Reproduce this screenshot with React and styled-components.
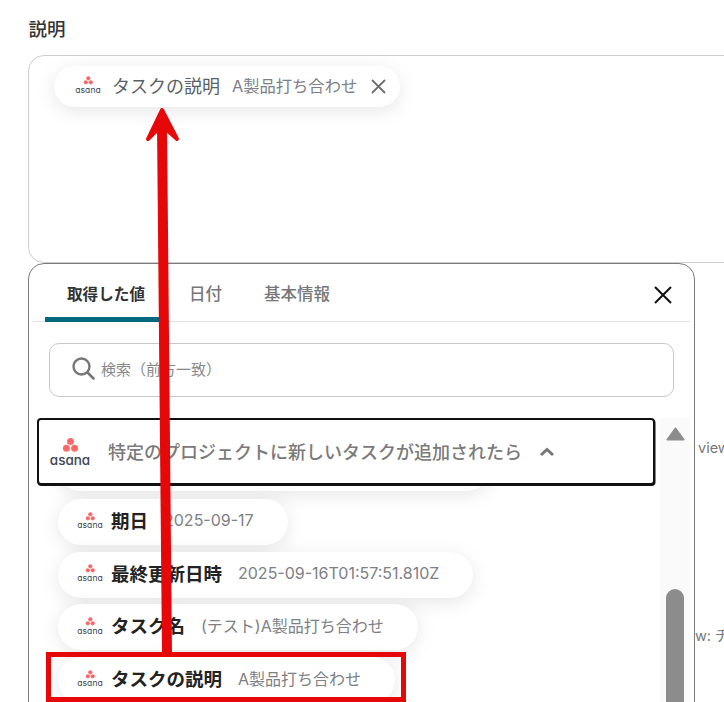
import React from "react";
import styled, { createGlobalStyle } from "styled-components";

const Global = createGlobalStyle`
  html, body { margin: 0; padding: 0; background: #fff; overflow: hidden; }
  body { font-family: Inter, "Noto Sans CJK JP", sans-serif; }
  #root { width: 724px; height: 702px; overflow: hidden; }
`;

const Page = styled.div`
  position: relative;
  width: 724px;
  height: 702px;
  overflow: hidden;
  padding: 16px 0 0 28px;
  box-sizing: border-box;
`;

const FieldLabel = styled.div`
  font-size: 18.5px;
  font-weight: 500;
  line-height: 26px;
  color: #333;
  margin: 0 0 13px 0.5px;
`;

const Area = styled.div`
  width: 760px;
  height: 208px;
  box-sizing: border-box;
  border: 1px solid #ccced2;
  border-radius: 16px;
  padding: 10px 0 0 25px;
`;

const Chip = styled.div`
  display: inline-flex;
  align-items: center;
  height: ${(p) => p.$height || 46}px;
  box-sizing: border-box;
  padding: ${(p) => p.$padding || "0 34px 0 19px"};
  border-radius: 24px;
  background: #fff;
  box-shadow: 0 4px 20px rgba(0, 0, 0, 0.1);
  white-space: nowrap;
  flex: none;
`;

const LogoBox = styled.span`
  display: inline-flex;
  flex-direction: column;
  align-items: center;
  width: ${(p) => (p.$large ? 40 : 26)}px;
  margin-bottom: ${(p) => (p.$large ? 2 : 4)}px;
  flex: none;
`;

const LogoDots = styled.svg`
  display: block;
  width: ${(p) => (p.$large ? 21 : 12.6)}px;
  height: ${(p) => (p.$large ? 18 : 10.8)}px;
`;

const LogoWord = styled.span`
  font-family: Inter, sans-serif;
  font-feature-settings: "cv11" 1;
  font-size: ${(p) => (p.$large ? 13.5 : 8.5)}px;
  line-height: ${(p) => (p.$large ? 12 : 8)}px;
  letter-spacing: ${(p) => (p.$large ? 0 : 0.1)}px;
  color: #3d4452;
`;

const ChipName = styled.span`
  font-size: ${(p) => (p.$light ? 18 : 18.5)}px;
  font-weight: ${(p) => (p.$light ? 400 : 700)};
  color: ${(p) => (p.$light ? "#5a5f66" : "#222")};
  margin: 0 0 4px ${(p) => p.$gap || 8}px;
`;

const ChipValue = styled.span`
  font-size: ${(p) => (p.$wide ? 16.3 : 16)}px;
  color: #7d8085;
  margin: 0 0 4px ${(p) => p.$gap || 16}px;
`;

const ChipClose = styled.svg`
  width: 17px;
  height: 17px;
  margin-left: 13px;
  flex: none;
`;

const Lower = styled.div`
  display: flex;
  align-items: flex-start;
`;

const Panel = styled.div`
  width: 667px;
  height: 470px;
  flex: none;
  box-sizing: border-box;
  border: 1px solid #7b7b7b;
  border-radius: 16px;
  padding: 0 4px;
  background: #fff;
  overflow: hidden;
`;

const TabBar = styled.div`
  display: flex;
  align-items: stretch;
  height: 58px;
  padding-left: 12px;
  border-bottom: 1px solid #e4e4e4;
  box-sizing: border-box;
`;

const Tab = styled.div`
  display: flex;
  align-items: center;
  padding: ${(p) => (p.$active ? "4px 22px 0 22px" : "4px 20px 0 22px")};
  font-size: ${(p) => (p.$active ? 15.6 : 16.5)}px;
  font-weight: ${(p) => (p.$active ? 700 : 500)};
  color: ${(p) => (p.$active ? "#333" : "#777")};
  border-bottom: 5px solid ${(p) => (p.$active ? "#00687f" : "transparent")};
  border-radius: 5px 5px 0 0;
  margin-bottom: -1px;
`;

const TabClose = styled.svg`
  width: 18px;
  height: 18px;
  margin: 22px 18px 0 auto;
`;

const SearchBox = styled.div`
  display: flex;
  align-items: center;
  height: 54px;
  margin: 21px 16px 21px 16px;
  padding: 0 0 3px 22px;
  box-sizing: border-box;
  border: 1px solid #c8c8c8;
  border-radius: 10px;
  color: #888;
  font-size: 15px;
`;

const SearchIcon = styled.svg`
  width: 23px;
  height: 23px;
  margin-right: 6px;
  flex: none;
`;

const Body = styled.div`
  display: flex;
  align-items: stretch;
  height: 300px;
`;

const ListColumn = styled.div`
  width: 627px;
  flex: none;
  padding-left: 4px;
  box-sizing: border-box;
`;

const GroupHeader = styled.div`
  position: relative;
  z-index: 1;
  display: flex;
  align-items: center;
  height: 67px;
  width: 618px;
  box-sizing: border-box;
  padding-left: 11px;
  border: 2px solid #111;
  border-radius: 4px;
  box-shadow: 0.5px 1px 0 #111;
  background: #fff;
  font-size: 18px;
  font-weight: 500;
  color: #7a7a7a;
`;

const GroupTitle = styled.span`
  margin: 0 0 2px 18px;
  white-space: nowrap;
`;

const Chevron = styled.svg`
  width: 16px;
  height: 10px;
  margin-left: 17px;
  flex: none;
`;

const ChipList = styled.div`
  display: flex;
  flex-direction: column;
  align-items: flex-start;
  gap: 6.67px;
  margin: -40px 0 0 21px;
`;

const PartialChip = styled(Chip)`
  width: 432px;
  margin-bottom: 1.33px;
`;

const Track = styled.div`
  width: 30px;
  flex: none;
  background: #fafafa;
  display: flex;
  flex-direction: column;
  align-items: center;
  padding-top: 9px;
  box-sizing: border-box;
`;

const TrackArrow = styled.svg`
  width: 19px;
  height: 14px;
  flex: none;
`;

const Thumb = styled.div`
  width: 18px;
  height: 160px;
  margin-top: 148px;
  border-radius: 9px;
  background: #8c8c8c;
  flex: none;
`;

const SideColumn = styled.div`
  display: flex;
  flex-direction: column;
  padding: 175px 0 0 3px;
  font-size: 14.5px;
  line-height: 20px;
  color: #777;
  white-space: nowrap;
  flex: none;
`;

const SideLine = styled.div`
  margin-left: ${(p) => p.$indent || 0}px;
  margin-bottom: ${(p) => p.$after || 0}px;
`;

const Overlay = styled.svg`
  position: absolute;
  left: 0;
  top: 0;
  width: 724px;
  height: 702px;
  z-index: 5;
  pointer-events: none;
`;

const HighlightBox = styled.div`
  position: absolute;
  left: 46px;
  top: 652px;
  width: 360px;
  height: 50px;
  box-sizing: border-box;
  border: 5px solid #e60808;
  z-index: 6;
`;

function AsanaLogo({ large }) {
  const id = large ? "asanaL" : "asanaS";
  return (
    <LogoBox $large={large}>
      <LogoDots $large={large} viewBox="0 0 21 18">
        <defs>
          <radialGradient id={id} cx="50%" cy="40%" r="70%">
            <stop offset="0%" stopColor="#ff5c74" />
            <stop offset="100%" stopColor="#f97b5f" />
          </radialGradient>
        </defs>
        <g fill={`url(#${id})`}>
          <circle cx="10.5" cy="5.5" r="3.5" />
          <circle cx="6.4" cy="12.2" r="3.5" />
          <circle cx="14.6" cy="12.2" r="3.5" />
        </g>
      </LogoDots>
      <LogoWord $large={large}>asana</LogoWord>
    </LogoBox>
  );
}

function ListChip({ name, value }) {
  return (
    <Chip>
      <AsanaLogo />
      <ChipName>{name}</ChipName>
      <ChipValue>{value}</ChipValue>
    </Chip>
  );
}

export default function App() {
  return (
    <>
      <Global />
      <Page>
        <FieldLabel>説明</FieldLabel>
        <Area>
          <Chip $height={41} $padding="0 13px 0 21px">
            <AsanaLogo />
            <ChipName $light $gap={11}>タスクの説明</ChipName>
            <ChipValue $wide $gap={12}>A製品打ち合わせ</ChipValue>
            <ChipClose viewBox="0 0 17 17">
              <path d="M2 2 L15 15 M15 2 L2 15" stroke="#6f6f6f" strokeWidth="1.8" fill="none" />
            </ChipClose>
          </Chip>
        </Area>
        <Lower>
          <Panel>
            <TabBar>
              <Tab $active>取得した値</Tab>
              <Tab>日付</Tab>
              <Tab>基本情報</Tab>
              <TabClose viewBox="0 0 18 18">
                <path d="M1 1 L17 17 M17 1 L1 17" stroke="#111" strokeWidth="2" fill="none" />
              </TabClose>
            </TabBar>
            <SearchBox>
              <SearchIcon viewBox="0 0 23 23">
                <circle cx="9.5" cy="9.5" r="8" stroke="#777" strokeWidth="2.4" fill="none" />
                <path d="M15.5 15.5 L21.5 21.5" stroke="#777" strokeWidth="2.6" strokeLinecap="round" />
              </SearchIcon>
              検索（前方一致）
            </SearchBox>
            <Body>
              <ListColumn>
                <GroupHeader>
                  <AsanaLogo large />
                  <GroupTitle>特定のプロジェクトに新しいタスクが追加されたら</GroupTitle>
                  <Chevron viewBox="0 0 16 10">
                    <path d="M2 8 L8 2.5 L14 8" stroke="#777" strokeWidth="3" fill="none" />
                  </Chevron>
                </GroupHeader>
                <ChipList>
                  <PartialChip />
                  <ListChip name="期日" value="2025-09-17" />
                  <ListChip name="最終更新日時" value="2025-09-16T01:57:51.810Z" />
                  <ListChip name="タスク名" value="(テスト)A製品打ち合わせ" />
                  <ListChip name="タスクの説明" value="A製品打ち合わせ" />
                </ChipList>
              </ListColumn>
              <Track>
                <TrackArrow viewBox="0 0 19 14">
                  <path d="M9.5 1.5 L17.5 12.5 H1.5 Z" fill="#8c8c8c" stroke="#8c8c8c" strokeWidth="2" strokeLinejoin="round" />
                </TrackArrow>
                <Thumb />
              </Track>
            </Body>
          </Panel>
          <SideColumn>
            <SideLine $after={168}>view</SideLine>
            <SideLine $indent={-3}>w: チ</SideLine>
          </SideColumn>
        </Lower>
        <Overlay viewBox="0 0 724 702">
          <path d="M167 654 L162 125" stroke="#e60808" strokeWidth="10" fill="none" />
          <path d="M162 110 L177 139 L167 130 L157 130 L148 139 Z" fill="#e60808" stroke="#e60808" strokeWidth="4" strokeLinejoin="round" />
        </Overlay>
        <HighlightBox />
      </Page>
    </>
  );
}
